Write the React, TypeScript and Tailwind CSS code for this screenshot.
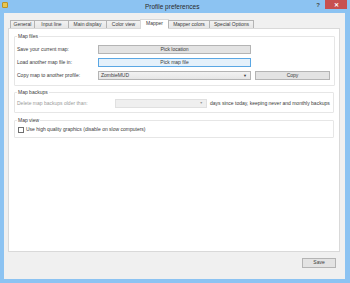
import React from "react";

const tabs = [
  { label: "General", w: "w-[25px]" },
  { label: "Input line", w: "w-[35px]" },
  { label: "Main display", w: "w-[39px]" },
  { label: "Color view", w: "w-[35px]" },
  { label: "Mapper", w: "w-[29px]", active: true },
  { label: "Mapper colors", w: "w-[42px]" },
  { label: "Special Options", w: "w-[45px]" },
];

function WinButton({ label, className = "", focused = false }: { label: string; className?: string; focused?: boolean }) {
  return (
    <div
      className={`h-[9px] flex items-center justify-center border ${
        focused ? "border-[#5aa7e4] bg-[#e5f1fb]" : "border-[#b4b4b4] bg-[#e3e3e3]"
      } ${className}`}
    >
      {label}
    </div>
  );
}

function Group({ title, children, className = "" }: { title: string; children: React.ReactNode; className?: string }) {
  return (
    <fieldset className={`border border-[#e6e6e6] rounded-[1px] ${className}`}>
      <legend className="ml-[2px] px-[1px] leading-[6px] h-[6px]">{title}</legend>
      {children}
    </fieldset>
  );
}

export default function App() {
  return (
    <div
      className="w-[350px] h-[283px] bg-[#8cc3f2] flex flex-col text-[5px] text-[#3a3a3a]"
      style={{ fontFamily: '"Liberation Sans", Arial, sans-serif' }}
    >
      {/* Title bar */}
      <div className="h-[13px] flex items-start shrink-0">
        <div className="w-[6px] h-[6px] mt-[2px] ml-[2px] rounded-[1px] bg-[#e8c650] border border-[#b89228]" />
        <div className="flex-1 text-center text-[6.5px] leading-[13px] text-[#2a2a2a] pl-[20px]">
          Profile preferences
        </div>
        <div className="text-[6px] leading-[8px] font-bold text-[#444] mr-[5px] mt-[1px]">?</div>
        <div className="w-[22px] h-[9px] bg-[#c75050] mr-[3px] flex items-center justify-center text-white text-[6px] font-bold leading-none">
          ✕
        </div>
      </div>

      {/* Client area */}
      <div className="flex-1 ml-[4px] mr-[5px] mb-[4px] bg-[#f0f0f0] flex flex-col">
        <div className="ml-[4px] mr-[5px] mt-[6px] flex flex-col">
          {/* Tabs */}
          <div className="flex items-end h-[9px] pl-[2px] relative z-10">
            {tabs.map((t, i) =>
              t.active ? (
                <div
                  key={t.label}
                  className={`${t.w} h-[10px] -mb-px -ml-px bg-white border border-b-0 border-[#d9d9d9] flex items-center justify-center pb-[1px]`}
                >
                  {t.label}
                </div>
              ) : (
                <div
                  key={t.label}
                  className={`${t.w} h-[8px] ${i === 0 ? "" : "-ml-px"} bg-gradient-to-b from-[#f2f2f2] to-[#e6e6e6] border border-b-0 border-[#b4b4b4] flex items-center justify-center`}
                >
                  {t.label}
                </div>
              )
            )}
          </div>

          {/* Panel */}
          <div className="h-[224px] bg-white border border-[#d9d9d9] px-[5px] pt-[4px] flex flex-col">
            <Group title="Map files" className="pb-[5px]">
              <div className="pt-[6px] flex flex-col gap-[4px] pr-[4px]">
                <div className="flex items-center">
                  <div className="w-[83px] pl-[2px]">Save your current map:</div>
                  <WinButton label="Pick location" className="w-[153px]" />
                </div>
                <div className="flex items-center">
                  <div className="w-[83px] pl-[2px]">Load another map file in:</div>
                  <WinButton label="Pick map file" className="w-[153px]" focused />
                </div>
                <div className="flex items-center">
                  <div className="w-[83px] pl-[2px]">Copy map to another profile:</div>
                  <div className="w-[153px] h-[9px] border border-[#b4b4b4] bg-gradient-to-b from-[#f2f2f2] to-[#e6e6e6] flex items-center pl-[2px] pr-[3px]">
                    <span className="flex-1">ZombieMUD</span>
                    <span className="text-[4px] leading-none">▼</span>
                  </div>
                  <WinButton label="Copy" className="w-[75px] ml-[4px]" />
                </div>
              </div>
            </Group>

            <Group title="Map backups" className="mt-[3px] pb-[4px]">
              <div className="pt-[4px] flex items-center">
                <div className="w-[100px] pl-[2px] text-[#9a9a9a]">Delete map backups older than:</div>
                <div className="w-[92px] h-[9px] border border-[#e0e0e0] bg-[#efefef] flex items-center justify-end pr-[3px]">
                  <span className="text-[3.5px] leading-none text-[#9a9a9a]">▼</span>
                </div>
                <div className="ml-[3px]">days since today, keeping never and monthly backups</div>
              </div>
            </Group>

            <Group title="Map view" className="mt-[4px] pb-[4px]">
              <div className="pt-[4px] flex items-center pl-[3px] h-[10px]">
                <div className="w-[6px] h-[6px] border border-[#707070] bg-white" />
                <div className="ml-[2px]">Use high quality graphics (disable on slow computers)</div>
              </div>
            </Group>
          </div>
        </div>

        {/* Footer */}
        <div className="flex justify-end mt-[6px] mr-[9px]">
          <WinButton label="Save" className="w-[34px] h-[10px]" />
        </div>
      </div>
    </div>
  );
}
